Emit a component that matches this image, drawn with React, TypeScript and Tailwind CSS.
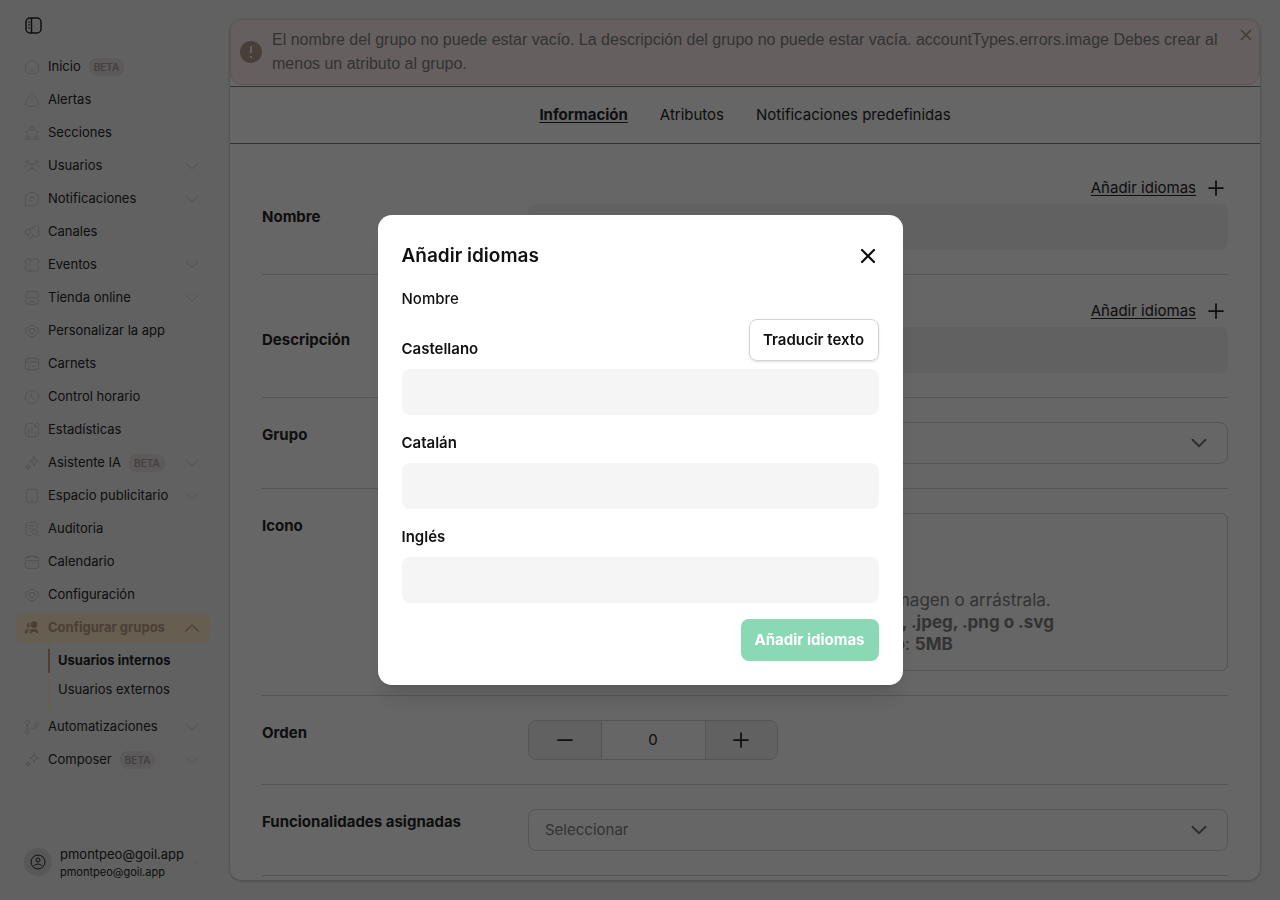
import { useState, type ReactNode } from "react";
import { ChevronDown, ChevronUp, Plus, Minus, X } from "lucide-react";

interface NavItem {
    label: string;
    icon: ReactNode;
    beta?: boolean;
    expandable?: boolean;
}

const gear = (
    <>
        <path d="M8.5 3.5h7l1.5 3 3.5.7 1.5 4.8-1.5 4.8-3.5.7-1.5 3h-7l-1.5-3-3.5-.7L2 12l1.5-4.8L7 6.5z" />
        <circle cx="12" cy="12" r="4" />
    </>
);

const sparkles = (
    <>
        <path d="M15 2l1.8 5.2L22 9l-5.2 1.8L15 16l-1.8-5.2L8 9l5.2-1.8z" />
        <path d="M6 14l1 3 3 1-3 1-1 3-1-3-3-1 3-1z" />
    </>
);

const navItems: NavItem[] = [
    {
        label: "Inicio",
        beta: true,
        icon: <><path d="M2.5 10.5c0-2 .8-3.200 2.500-4.500l4-3c2-1.300 4-1.300 6 0l4 3c1.700 1.300 2.500 2.500 2.500 4.500v6c0 3.500-1.500 5-5 5h-9c-3.500 0-5-1.500-5-5z" /><path d="M9 17h6" /></>,
    },
    {
        label: "Alertas",
        icon: <><path d="M9.500 4c1.300-2 3.700-2 5 0l7 12.500c1.200 2.500 0 4.500-2.500 4.500H5c-2.500 0-3.700-2-2.500-4.500z" /><path d="M12 9v4M12 16.500v.5" /></>,
    },
    {
        label: "Secciones",
        icon: <><circle cx="12" cy="5" r="3" /><circle cx="5" cy="19" r="3" /><circle cx="19" cy="19" r="3" /><path d="M8.500 6.500C5.500 8 4 10.500 4 14M15.500 6.500C18.500 8 20 10.500 20 14M9.500 21h5" /></>,
    },
    {
        label: "Usuarios",
        expandable: true,
        icon: <><circle cx="12" cy="11" r="3" /><circle cx="5" cy="6" r="2.500" /><circle cx="19" cy="6" r="2.500" /><path d="M7 20c0-6 10-6 10 0M1.500 14c0-2 1.500-3.500 4-3.500M22.500 14c0-2-1.500-3.500-4-3.500" /></>,
    },
    {
        label: "Notificaciones",
        expandable: true,
        icon: <><path d="M2 22V12C2 5.500 6 2 12 2s10 4 10 10-4 10-10 10z" /><path d="M8 10h8M8 15h5" /></>,
    },
    {
        label: "Canales",
        icon: <path d="M2 10c0-1 1-2 2-2h5l9-5c2-1 4 0 4 2v12c0 2-2 3-4 2l-6-3v4c0 3-5 3-5 0v-4H4c-1 0-2-1-2-2zM9 8v7" />,
    },
    {
        label: "Eventos",
        expandable: true,
        icon: <><path d="M2 9V6c0-2 1-3 3-3h14c2 0 3 1 3 3v3c-3 0-3 6 0 6v3c0 2-1 3-3 3H5c-2 0-3-1-3-3v-3c3 0 3-6 0-6z" /><path d="M9 3v4M9 10v4M9 17v4" /></>,
    },
    {
        label: "Tienda online",
        expandable: true,
        icon: <><path d="M3 11v6c0 3 1.500 5 5 5h8c3.500 0 5-2 5-5v-6M5 2h14l3 6c0 4-5 5-6.500 2-1.500 3-5.500 3-7 0C7 13 2 12 2 8z" /><path d="M9 22v-5h6v5" /></>,
    },
    { label: "Personalizar la app", icon: gear },
    {
        label: "Carnets",
        icon: <><rect x="2" y="3.500" width="20" height="17" rx="4" /><path d="M2 9h20M7 16h2M12 16h4" /></>,
    },
    {
        label: "Control horario",
        icon: <><circle cx="12" cy="12" r="10" /><path d="M11 7v5l4 4" /></>,
    },
    {
        label: "Estadísticas",
        icon: <><path d="M14 2H9C4 2 2 4 2 9v6c0 5 2 7 7 7h6c5 0 7-2 7-7v-5M7 11v7M12 8v10M17 14v4" /><circle cx="19" cy="5" r="3" /></>,
    },
    { label: "Asistente IA", icon: sparkles, beta: true, expandable: true },
    {
        label: "Espacio publicitario",
        expandable: true,
        icon: <><rect x="4" y="2" width="16" height="20" rx="4" /><path d="M10 19h4" /></>,
    },
    {
        label: "Auditoria",
        icon: <><path d="M20 10V6c0-3-1-4-4-4H7C4 2 3 3 3 6v12c0 3 1 4 4 4h4M7 7h9M7 12h4" /><circle cx="16" cy="16" r="4" /><path d="M19 19l3 3" /></>,
    },
    {
        label: "Calendario",
        icon: <><rect x="2" y="4" width="20" height="18" rx="4" /><path d="M7 1.500v5M17 1.500v5M2 10h20M7 14h1M12 14h1M16 14h1M7 18h1M12 18h1" /></>,
    },
    { label: "Configuración", icon: gear },
];

const bottomItems: NavItem[] = [
    {
        label: "Automatizaciones",
        expandable: true,
        icon: <><circle cx="5" cy="5" r="3" /><circle cx="5" cy="19" r="3" /><circle cx="19" cy="7" r="3" /><path d="M5 8v8M19 10c0 4-4 4-8 4" /></>,
    },
    { label: "Composer", icon: sparkles, beta: true, expandable: true },
];

const tabs = ["Información", "Atributos", "Notificaciones predefinidas"];
const languages = ["Castellano", "Catalán", "Inglés"];

function NavRow({ item }: { item: NavItem }) {
    return (
        <button className="flex h-[30px] w-full items-center px-2 text-left">
            <svg viewBox="0 0 24 24" className="size-4" fill="none" stroke="currentColor" strokeWidth="1.500" color="#cdcdcd">
                {item.icon}
            </svg>
            <span className="ml-2">{item.label}</span>
            {item.beta && (
                <span className="ml-2 flex h-[18px] items-center rounded-lg bg-[#e5e2e0] px-[5px] text-[10px] font-semibold text-[#a8a09b]">
                    BETA
                </span>
            )}
            {item.expandable && <ChevronDown className="-mr-0.5 ml-auto size-6 text-[#cdcdcd]" strokeWidth={1} />}
        </button>
    );
}

function Sidebar() {
    return (
        <aside className="flex w-[230px] shrink-0 flex-col pl-4 pr-5 text-[13px] text-[#262626]">
            <button aria-label="Contraer menú" className="mt-4 ml-2 size-5">
                <svg viewBox="0 0 20 20" className="size-5" fill="none" stroke="currentColor" strokeWidth="1.500">
                    <rect x="2" y="2" width="15" height="15" rx="4" />
                    <path d="M7.500 2v15" />
                    <path d="M4 6h2M4 9h2M4 12h2" strokeWidth="1" />
                </svg>
            </button>

            <nav className="mt-4 flex flex-col gap-[3px]">
                {navItems.map((item) => (
                    <NavRow key={item.label} item={item} />
                ))}
                <div>
                    <button className="flex h-[30px] w-full items-center rounded-lg bg-[#ffeac8] px-2 text-left font-bold text-[#b8a088]">
                        <svg viewBox="0 0 24 24" className="size-4" fill="currentColor">
                            <circle cx="15" cy="7" r="5" />
                            <path d="M8 4c-5 0-5 8 0 8zM8 20l2-6h9l3 6h-3l-1-2h-6l-1 2zM6 13c-3 1-5 3-5 7h4c0-3 1-5 3-7z" />
                        </svg>
                        <span className="ml-2">Configurar grupos</span>
                        <ChevronUp className="-mr-0.5 ml-auto size-6" strokeWidth={1.250} />
                    </button>
                    <div className="ml-8 flex flex-col gap-[5px] border-l-2 border-[#ffeac8] pt-1.5 pb-[7px]">
                        <a href="#internos" className="-ml-0.5 flex h-6 items-center border-l-2 border-[#b8a088] pl-2 font-bold">
                            Usuarios internos
                        </a>
                        <a href="#externos" className="flex h-6 items-center pl-2">
                            Usuarios externos
                        </a>
                    </div>
                </div>
                {bottomItems.map((item) => (
                    <NavRow key={item.label} item={item} />
                ))}
            </nav>

            <button className="mt-auto mb-5 flex items-center gap-2 pl-2 text-left">
                <span className="flex size-7 shrink-0 items-center justify-center rounded-full bg-[#dcdcdc]">
                    <svg viewBox="0 0 16 16" className="size-4" fill="none" stroke="currentColor">
                        <circle cx="8" cy="8" r="7" />
                        <circle cx="8" cy="6" r="2" />
                        <path d="M4 12c1.500-2.500 6.500-2.500 8 0" />
                    </svg>
                </span>
                <span className="flex flex-col">
                    <span className="leading-5">pmontpeo@goil.app</span>
                    <span className="text-[11px] leading-4">pmontpeo@goil.app</span>
                </span>
                <ChevronUp className="size-2 text-[#cdcdcd]" />
            </button>
        </aside>
    );
}

// Row of the form: label on the left, field on the right
function FormRow({ label, htmlFor, children, translatable }: { label: string; htmlFor: string; children: ReactNode; translatable?: boolean }) {
    return (
        <div className="flex border-b border-[#d4d4d4] py-6">
            <label htmlFor={htmlFor} className={`w-[266px] shrink-0 font-bold leading-[26px] ${translatable ? "pt-7" : ""}`}>
                {label}
            </label>
            <div className="min-w-0 flex-1">
                {translatable && (
                    <div className="mb-1 flex justify-end">
                        <button type="button" className="flex h-6 items-center gap-2 underline underline-offset-2">
                            Añadir idiomas
                            <Plus className="size-6" strokeWidth={1.750} />
                        </button>
                    </div>
                )}
                {children}
            </div>
        </div>
    );
}

function SelectField({ id, placeholder }: { id: string; placeholder: string }) {
    return (
        <div className="relative">
            <select id={id} className="h-[42px] w-full appearance-none rounded-lg border border-[#d4d4d4] bg-white px-4 text-[#808080]">
                <option>{placeholder}</option>
            </select>
            <ChevronDown className="pointer-events-none absolute top-2 right-4 size-[26px] text-[#737373]" strokeWidth={1.750} />
        </div>
    );
}

function TranslateDialog({ onClose }: { onClose: () => void }) {
    return (
        <div className="fixed inset-0 flex items-center justify-center bg-black/60">
            <div role="dialog" aria-modal="true" aria-labelledby="dialog-title" className="w-[525px] rounded-[14px] bg-white p-6 font-semibold text-[#111111] shadow-xl">
                <div className="flex h-[34px] items-center justify-between">
                    <h2 id="dialog-title" className="text-[19px]">Añadir idiomas</h2>
                    <button aria-label="Cerrar" onClick={onClose} className="-mr-px">
                        <X className="size-6" strokeWidth={2.250} />
                    </button>
                </div>
                <p className="mt-3.5 font-medium leading-6">Nombre</p>

                {languages.map((language, index) => (
                    <div key={language} className={index === 0 ? "mt-2" : "mt-4"}>
                        <div className="flex items-end justify-between">
                            <label htmlFor={language} className="leading-6">{language}</label>
                            {index === 0 && (
                                <button className="h-[42px] w-[130px] rounded-lg border border-[#d1d5d5] shadow-sm">Traducir texto</button>
                            )}
                        </div>
                        <input id={language} type="text" className="mt-2 block h-[46px] w-full rounded-lg bg-[#f5f5f5] px-4" />
                    </div>
                ))}

                <div className="mt-4 flex justify-end">
                    <button className="h-[42px] w-[138px] rounded-lg bg-[#8ad8b4] font-bold text-white">Añadir idiomas</button>
                </div>
            </div>
        </div>
    );
}

export default function App() {
    const [open, setOpen] = useState<boolean>(true);
    const [order, setOrder] = useState<number>(0);

    return (
        <div className="flex h-screen overflow-hidden bg-[#f3f3f3] font-['Inter',sans-serif] text-[15px] text-[#262626]">
            <Sidebar />

            <main className="mt-[19px] mr-5 mb-5 min-w-0 flex-1 overflow-hidden rounded-xl bg-white shadow-[0_1px_2px_1px_#cfcfcf]">
                <div role="alert" className="mb-px flex h-[66px] items-center rounded-xl border border-[#e0d4d4] bg-[#ffeeee] pl-[9px] font-['Liberation_Sans',sans-serif] text-base text-[#808080]">
                    <svg viewBox="0 0 22 22" className="size-[22px] shrink-0">
                        <circle cx="11" cy="11" r="11" fill="#b59f92" />
                        <path d="M11 5v7M11 15v2" stroke="#ffeeee" strokeWidth="2" />
                    </svg>
                    <p className="ml-2.5 flex-1 leading-6">
                        El nombre del grupo no puede estar vacío. La descripción del grupo no puede estar vacía. accountTypes.errors.image Debes crear al menos un atributo al grupo.
                    </p>
                    <button aria-label="Cerrar aviso" className="mt-1.5 mr-1 self-start">
                        <X className="size-[18px] text-[#a89286]" />
                    </button>
                </div>

                <nav className="flex h-[58px] items-center justify-center gap-8 border-y border-[#808080]">
                    {tabs.map((tab, index) => (
                        <a key={tab} href="#" className={index === 0 ? "font-bold underline underline-offset-2" : ""}>
                            {tab}
                        </a>
                    ))}
                </nav>

                <form className="px-8 pt-2">
                    <FormRow label="Nombre" htmlFor="nombre" translatable>
                        <input id="nombre" type="text" className="block h-[46px] w-full rounded-lg bg-[#f2f2f2] px-4" />
                    </FormRow>
                    <FormRow label="Descripción" htmlFor="descripcion" translatable>
                        <input id="descripcion" type="text" className="block h-[46px] w-full rounded-lg bg-[#f2f2f2] px-4" />
                    </FormRow>
                    <FormRow label="Grupo" htmlFor="grupo">
                        <SelectField id="grupo" placeholder="" />
                    </FormRow>
                    <FormRow label="Icono" htmlFor="icono">
                        <label className="flex h-[158px] items-end justify-center rounded-md border border-[#d4d4d4] pb-[15px] text-[17px] leading-[22px] text-[#808080]">
                            <span>
                                Haz clic para subir una imagen o arrástrala.
                                <br />
                                Formatos admitidos: <b>.jpg, .jpeg, .png o .svg</b>
                                <br />
                                Peso máximo por archivo: <b>5MB</b>
                            </span>
                            <input id="icono" type="file" className="sr-only" />
                        </label>
                    </FormRow>
                    <FormRow label="Orden" htmlFor="orden">
                        <div className="flex h-10 w-[250px] divide-x divide-[#d4d4d4] overflow-hidden rounded-lg border border-[#d4d4d4] bg-[#f2f2f2]">
                            <button type="button" aria-label="Restar" onClick={() => setOrder(order - 1)} className="flex flex-1 items-center justify-center">
                                <Minus className="size-6" strokeWidth={1.750} />
                            </button>
                            <input
                                id="orden"
                                type="text"
                                value={order}
                                onChange={(e) => setOrder(Number(e.target.value))}
                                className="w-[104px] bg-white text-center"
                            />
                            <button type="button" aria-label="Sumar" onClick={() => setOrder(order + 1)} className="flex flex-1 items-center justify-center">
                                <Plus className="size-6" strokeWidth={1.750} />
                            </button>
                        </div>
                    </FormRow>
                    <FormRow label="Funcionalidades asignadas" htmlFor="funcionalidades">
                        <SelectField id="funcionalidades" placeholder="Seleccionar" />
                    </FormRow>
                </form>
            </main>

            {open && <TranslateDialog onClose={() => setOpen(false)} />}
        </div>
    );
}
